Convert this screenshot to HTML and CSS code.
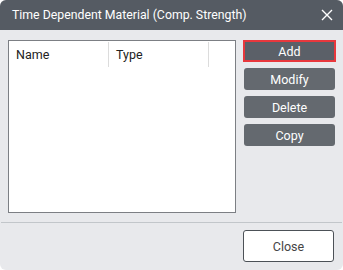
FILE: index.html
```html
<!DOCTYPE html>
<html>
<head>
<meta charset="utf-8">
<link rel="stylesheet" href="styles.css">
</head>
<body>
<div class="dialog">
  <div class="titlebar">
    <span class="title">Time Dependent Material (Comp. Strength)</span>
    <svg class="close-x" width="12" height="12" viewBox="0 0 12 12"><path d="M1 1L11 11M11 1L1 11" stroke="#fff" stroke-width="1.4" fill="none"/></svg>
  </div>
  <div class="content">
    <div class="list">
      <div class="list-head">
        <div class="col col-name">Name</div>
        <div class="col col-type">Type</div>
        <div class="col col-rest"></div>
      </div>
    </div>
    <div class="actions">
      <button class="btn btn-focus">Add</button>
      <button class="btn">Modify</button>
      <button class="btn">Delete</button>
      <button class="btn">Copy</button>
    </div>
  </div>
  <div class="footer">
    <button class="btn-close">Close</button>
  </div>
</div>
</body>
</html>
```
FILE: styles.css
```css
html, body {
  margin: 0;
  padding: 0;
  background: #ffffff;
}
.dialog {
  width: 343px;
  height: 270px;
  background: #e8e9ec;
  border-radius: 6px;
  overflow: hidden;
  display: flex;
  flex-direction: column;
  font-family: Roboto, "Liberation Sans", sans-serif;
  font-size: 12.5px;
}
.titlebar {
  height: 30px;
  flex: none;
  background: #555b63;
  display: flex;
  align-items: center;
  justify-content: space-between;
  padding: 0 10px 0 12px;
  color: #ffffff;
}
.title {
  font-size: 12.3px;
}
.close-x {
  display: block;
}
.content {
  flex: 1;
  display: flex;
  gap: 7px;
  padding: 10px 7px 9px 8px;
}
.list {
  width: 226px;
  background: #ffffff;
  border: 1px solid #7c7f84;
}
.list-head {
  display: flex;
  height: 25px;
  align-items: stretch;
  padding-top: 1px;
}
.col {
  display: flex;
  align-items: center;
  color: #222;
  font-size: 12.5px;
}
.col-name {
  width: 92px;
  padding-left: 7px;
  border-right: 1px solid #dcdcdc;
}
.col-type {
  width: 92px;
  padding-left: 7px;
  border-right: 1px solid #dcdcdc;
}
.actions {
  flex: 1;
  display: flex;
  flex-direction: column;
  gap: 6px;
}
.btn {
  height: 22px;
  margin: 0 1px;
  border: none;
  border-radius: 3px;
  background: #64696f;
  color: #ffffff;
  font-family: Roboto, "Liberation Sans", sans-serif;
  font-size: 12.5px;
  padding: 0;
}
.btn-focus {
  margin: 0;
  border: 2px solid #e8383d;
  border-radius: 0;
  background: #5b6068;
}
.footer {
  flex: none;
  border-top: 1px solid #c2c6ca;
  padding: 7px 8px 8px 0;
  display: flex;
  justify-content: flex-end;
  margin: 0 1px;
}
.btn-close {
  width: 91px;
  height: 32px;
  background: #ffffff;
  border: 1px solid #4c5157;
  border-radius: 3px;
  color: #444;
  font-family: Roboto, "Liberation Sans", sans-serif;
  font-size: 12.5px;
  padding: 0;
}
```
